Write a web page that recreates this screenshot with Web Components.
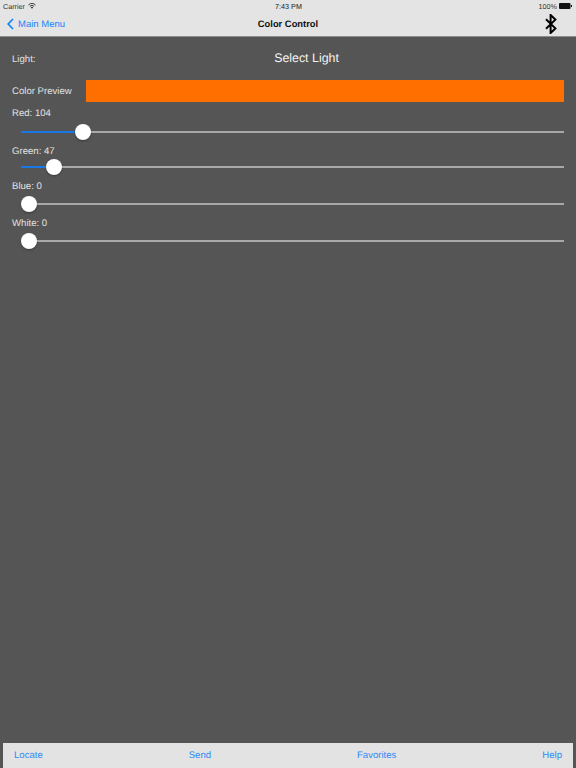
<!DOCTYPE html>
<html>
<head>
<meta charset="utf-8">
<title>Color Control</title>
<style>
  html, body { margin: 0; height: 100%; }
  body { background: #555555; font-family: "Liberation Sans", Arial, sans-serif; text-rendering: geometricPrecision; }
  #page { display: flex; flex-direction: column; height: 768px; width: 576px; overflow: hidden; }
</style>
</head>
<body>
<div id="page">
  <app-header title-text="Color Control" back="Main Menu"></app-header>
  <color-panel>
    <light-row></light-row>
    <color-preview color="#ff6f00"></color-preview>
    <color-slider label="Red: 104" pos="62" top="6" gap="2"></color-slider>
    <color-slider label="Green: 47" pos="33" top="4" gap="-1"></color-slider>
    <color-slider label="Blue: 0" pos="8" top="4" gap="1"></color-slider>
    <color-slider label="White: 0" pos="8" top="4" gap="1"></color-slider>
  </color-panel>
  <bottom-bar>
    <span>Locate</span>
    <span>Send</span>
    <span>Favorites</span>
    <span>Help</span>
  </bottom-bar>
</div>

<script>
class AppHeader extends HTMLElement {
    constructor() {
        super();
        const shadow = this.attachShadow({ mode: 'open' });
        shadow.innerHTML = `
            <style>
                :host {
                    display: block;
                    flex: none;
                    height: 36px;
                    background: #e4e4e4;
                    border-bottom: 1px solid #8e8e8e;
                    color: #111;
                }
                .status {
                    display: grid;
                    grid-template-columns: 1fr auto 1fr;
                    align-items: center;
                    height: 12px;
                    font-size: 7.2px;
                    padding: 0 4px 0 3px;
                }
                .carrier { display: flex; align-items: center; gap: 3px; color: #333; }
                .clock { color: #222; padding-left: 2px; }
                .battery { display: flex; justify-content: flex-end; align-items: center; gap: 2px; color: #333; }
                .nav {
                    display: grid;
                    grid-template-columns: 1fr auto 1fr;
                    align-items: center;
                    height: 24px;
                }
                .back {
                    display: flex;
                    align-items: center;
                    gap: 4px;
                    padding-left: 7px;
                    font-size: 9.5px;
                    color: #1a82fb;
                }
                .title { font-size: 9.4px; font-weight: bold; color: #111; padding-bottom: 1px; }
                .right { display: flex; justify-content: flex-end; padding-right: 19px; }
            </style>
            <div class="status">
                <div class="carrier">Carrier
                    <svg width="8" height="6" viewBox="0 0 16 12">
                        <path d="M8 11.5 L5.6 8.8 A3.6 3.6 0 0 1 10.4 8.8 Z" fill="#333"/>
                        <path d="M3.6 6.6 A6.6 6.6 0 0 1 12.4 6.6" fill="none" stroke="#333" stroke-width="1.9"/>
                        <path d="M1 3.9 A10.4 10.4 0 0 1 15 3.9" fill="none" stroke="#333" stroke-width="1.9"/>
                    </svg>
                </div>
                <div class="clock">7:43 PM</div>
                <div class="battery">100%
                    <svg width="13" height="6" viewBox="0 0 13 6">
                        <rect x="0" y="0" width="11.5" height="6" rx="1" fill="#111"/>
                        <rect x="12" y="2" width="1" height="2" fill="#111"/>
                    </svg>
                </div>
            </div>
            <div class="nav">
                <div class="back">
                    <svg width="7" height="12" viewBox="0 0 7 12">
                        <path d="M6 1 L1.2 6 L6 11" fill="none" stroke="#1a82fb" stroke-width="1.8"/>
                    </svg>
                    <span>${this.getAttribute('back')}</span>
                </div>
                <div class="title">${this.getAttribute('title-text')}</div>
                <div class="right">
                    <svg width="12" height="20" viewBox="0 0 12 20">
                        <path d="M1 5.2 L10.4 14.4 L5.6 19 L5.6 1 L10.4 5.6 L1 14.8" fill="none" stroke="#000" stroke-width="2"/>
                    </svg>
                </div>
            </div>
        `;
    }
}

class ColorPanel extends HTMLElement {
    constructor() {
        super();
        const shadow = this.attachShadow({ mode: 'open' });
        shadow.innerHTML = `
            <style>
                :host {
                    display: flex;
                    flex-direction: column;
                    flex: 1;
                    min-height: 0;
                    padding: 0 12px;
                    color: #e2e2e2;
                    font-size: 9.6px;
                }
            </style>
            <slot></slot>
        `;
    }
}

class LightRow extends HTMLElement {
    constructor() {
        super();
        const shadow = this.attachShadow({ mode: 'open' });
        shadow.innerHTML = `
            <style>
                :host {
                    display: grid;
                    grid-template-columns: 1fr auto 1fr;
                    align-items: center;
                    height: 43px;
                }
                .name { padding-top: 1px; }
                .pick {
                    font-size: 12.4px;
                    color: #f2f2f2;
                    padding-left: 37px;
                    padding-bottom: 1px;
                }
            </style>
            <div class="name">Light:</div>
            <div class="pick">Select Light</div>
            <div></div>
        `;
    }
}

class ColorPreview extends HTMLElement {
    constructor() {
        super();
        const shadow = this.attachShadow({ mode: 'open' });
        shadow.innerHTML = `
            <style>
                :host {
                    display: flex;
                    align-items: center;
                    height: 22px;
                }
                .name { width: 74px; flex: none; padding-top: 1px; }
                .swatch { flex: 1; height: 100%; background: ${this.getAttribute('color')}; }
            </style>
            <div class="name">Color Preview</div>
            <div class="swatch"></div>
        `;
    }
}

class ColorSlider extends HTMLElement {
    constructor() {
        super();
        const shadow = this.attachShadow({ mode: 'open' });
        const pos = Number(this.getAttribute('pos'));
        shadow.innerHTML = `
            <style>
                :host {
                    display: block;
                    margin-top: ${this.getAttribute('top')}px;
                }
                .label { height: 12px; line-height: 12px; }
                .track {
                    display: flex;
                    align-items: center;
                    height: 20px;
                    margin-top: ${this.getAttribute('gap')}px;
                    margin-left: 9px;
                }
                .fill { width: ${pos}px; height: 1.5px; flex: none; background: #1a78e6; }
                .thumb {
                    width: 16px;
                    height: 16px;
                    flex: none;
                    margin: 0 -8px;
                    border-radius: 50%;
                    background: #fff;
                    box-shadow: 0 1px 2px rgba(0,0,0,.35);
                    z-index: 1;
                }
                .rest { flex: 1; height: 1.5px; background: #a8a8a8; }
            </style>
            <div class="label">${this.getAttribute('label')}</div>
            <div class="track">
                <div class="fill"></div>
                <div class="thumb"></div>
                <div class="rest"></div>
            </div>
        `;
    }
}

class BottomBar extends HTMLElement {
    constructor() {
        super();
        const shadow = this.attachShadow({ mode: 'open' });
        shadow.innerHTML = `
            <style>
                :host {
                    display: flex;
                    flex: none;
                    justify-content: space-between;
                    align-items: center;
                    height: 25px;
                    margin: 0 3px;
                    padding: 0 11px;
                    box-sizing: border-box;
                    background: #e3e3e3;
                    color: #2f8bf5;
                    font-size: 9.6px;
                }
            </style>
            <slot></slot>
        `;
    }
}

customElements.define('app-header', AppHeader);
customElements.define('color-panel', ColorPanel);
customElements.define('light-row', LightRow);
customElements.define('color-preview', ColorPreview);
customElements.define('color-slider', ColorSlider);
customElements.define('bottom-bar', BottomBar);
</script>
</body>
</html>
